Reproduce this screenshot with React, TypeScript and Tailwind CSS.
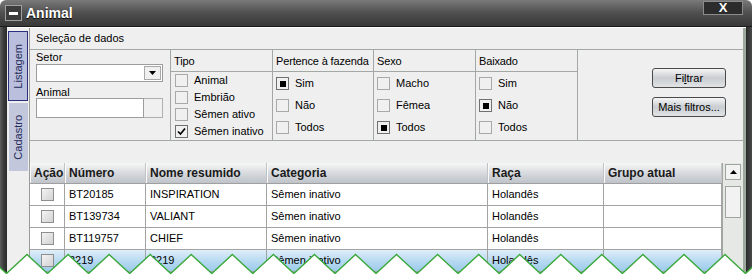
import React from 'react';

type Mark = 'sq' | 'check' | undefined;

function Box({ mark }: { mark?: Mark }) {
  return (
    <span
      className={
        'w-[13px] h-[13px] border bg-[#f0f0f0] flex items-center justify-center shrink-0 ' +
        (mark ? 'border-[#707070]' : 'border-[#a9a9a9]')
      }
    >
      {mark === 'sq' && <span className="w-[6px] h-[6px] bg-black" />}
      {mark === 'check' && (
        <svg width="11" height="11" viewBox="0 0 11 11">
          <polyline points="2,5.5 4.5,8 9,2.5" fill="none" stroke="#000" strokeWidth="1.7" />
        </svg>
      )}
    </span>
  );
}

function FilterCol({
  title,
  items,
  tight,
  width,
}: {
  title: string;
  items: { label: string; mark?: Mark }[];
  tight?: boolean;
  width: string;
}) {
  return (
    <div className={`${width} border-r border-[#a4a8a4] flex flex-col`}>
      <div className="h-[22px] border-b border-[#a4a8a4] flex items-center pl-[3px] pt-[1px] whitespace-nowrap overflow-hidden tracking-[-0.15px]">
        {title}
      </div>
      <div className={tight ? 'flex flex-col gap-[4px] pt-[2px] pl-[4px]' : 'flex flex-col gap-[9px] pt-[5px] pl-[3px]'}>
        {items.map(it => (
          <div key={it.label} className="flex items-center gap-[6px] h-[13px]">
            <Box mark={it.mark} />
            <span className="leading-[13px]">{it.label}</span>
          </div>
        ))}
      </div>
    </div>
  );
}

const cols = [
  { w: 'w-[35px]', label: 'Ação' },
  { w: 'w-[81px]', label: 'Número' },
  { w: 'w-[121px]', label: 'Nome resumido' },
  { w: 'w-[221px]', label: 'Categoria' },
  { w: 'w-[116px]', label: 'Raça' },
  { w: 'w-[118px]', label: 'Grupo atual' },
];

const rows = [
  ['BT20185', 'INSPIRATION', 'Sêmen inativo', 'Holandês', ''],
  ['BT139734', 'VALIANT', 'Sêmen inativo', 'Holandês', ''],
  ['BT119757', 'CHIEF', 'Sêmen inativo', 'Holandês', ''],
  ['3219', '3219', 'Sêmen inativo', 'Holandês', ''],
];

function Zigzag() {
  const period = 41.06;
  const pts: string[] = [];
  for (let k = -1; k < 19; k++) {
    const px = 27 + period * k;
    pts.push(`${px.toFixed(1)},4.5`);
    pts.push(`${(px + period / 2).toFixed(1)},23.5`);
  }
  const line = 'M' + pts.join(' L');
  const fill = line + ' L800,40 L-60,40 Z';
  return (
    <svg className="absolute left-0 top-[250px]" width="752" height="24" viewBox="0 0 752 24">
      <path d={fill} fill="#ffffff" />
      <path d={line} fill="none" stroke="#3aa83a" strokeWidth="1.4" />
    </svg>
  );
}

export default function App() {
  return (
    <div className="w-[752px] h-[274px] relative overflow-hidden bg-white text-[11px] text-black font-['Liberation_Sans',Arial,sans-serif]">
      {/* Title bar */}
      <div className="h-[27px] rounded-t-[6px] bg-linear-to-b from-[#7a7a7a] via-[#4f4f4f] to-[#383838] border-b border-[#1c1c1c] flex items-start">
        <div className="mt-[5px] ml-[5px] w-[17px] h-[16px] border border-[#a0a0a0] bg-[#3c3c3c] flex items-center justify-center">
          <div className="w-[9px] h-[3px] bg-white" />
        </div>
        <span className="mt-[5px] ml-[4px] text-white font-bold text-[14px] leading-[16px] [text-shadow:0_1px_1px_#000]">
          Animal
        </span>
        <div className="ml-auto mr-[9px] mt-[1px] w-[40px] h-[14px] border border-[#8c8c8c] bg-[#2c2c2c] flex items-center justify-center">
          <span className="text-white font-bold text-[13px] leading-[12px]">X</span>
        </div>
      </div>

      {/* Body */}
      <div className="flex h-[247px]">
        <div className="w-[7px] bg-linear-to-r from-[#5e5e5e] via-[#3c3c3c] to-[#2a2a2a]" />
        <div className="flex-1 flex bg-[#efefef] border-t border-white">
          {/* Tab strip */}
          <div className="w-[22px] flex flex-col pt-[3px] pl-[1px] gap-[2px]">
            <div className="w-[20px] h-[70px] bg-[#b9bfdc] border border-[#2c2f7c] flex items-center justify-center">
              <span className="[writing-mode:vertical-rl] rotate-180 text-[#1f2a5a]">Listagem</span>
            </div>
            <div className="w-[19px] h-[68px] bg-[#c3c7dc] flex items-center justify-center ml-[1px]">
              <span className="[writing-mode:vertical-rl] rotate-180 text-[#1f2a5a]">Cadastro</span>
            </div>
          </div>

          {/* Main panel */}
          <div className="w-[714px] border-l border-[#9a9a9a] flex flex-col">
            <div className="h-[21px] flex items-center pl-[6px]">Seleção de dados</div>

            {/* Filter panel */}
            <div className="h-[92px] border-y border-[#a4a8a4] flex">
              <div className="w-[141px] border-r border-[#a4a8a4] pl-[6px] pt-[1px] flex flex-col">
                <span className="leading-[13px]">Setor</span>
                <div className="w-[127px] h-[18px] border border-[#9c9c9c] bg-white flex justify-end p-[1px]">
                  <div className="w-[17px] h-[14px] border border-[#a8a8a8] bg-[#f0f0f0] flex items-center justify-center">
                    <svg width="7" height="4" viewBox="0 0 7 4">
                      <polygon points="0,0 7,0 3.5,4" fill="#000" />
                    </svg>
                  </div>
                </div>
                <span className="mt-[4px] leading-[12px]">Animal</span>
                <div className="flex">
                  <div className="w-[108px] h-[20px] border border-[#9c9c9c] bg-white" />
                  <div className="w-[19px] h-[20px] border border-[#b0b0b0] border-l-0 bg-[#f0f0f0]" />
                </div>
              </div>
              <FilterCol
                title="Tipo"
                width="w-[102px]"
                tight
                items={[
                  { label: 'Animal' },
                  { label: 'Embrião' },
                  { label: 'Sêmen ativo' },
                  { label: 'Sêmen inativo', mark: 'check' },
                ]}
              />
              <FilterCol
                title="Pertence à fazenda"
                width="w-[101px]"
                items={[{ label: 'Sim', mark: 'sq' }, { label: 'Não' }, { label: 'Todos' }]}
              />
              <FilterCol
                title="Sexo"
                width="w-[102px]"
                items={[{ label: 'Macho' }, { label: 'Fêmea' }, { label: 'Todos', mark: 'sq' }]}
              />
              <FilterCol
                title="Baixado"
                width="w-[102px]"
                items={[{ label: 'Sim' }, { label: 'Não', mark: 'sq' }, { label: 'Todos' }]}
              />
              <div className="flex-1 flex flex-col items-end pr-[17px] pt-[18px] gap-[9px]">
                <button className="w-[74px] h-[20px] rounded-[3px] border border-[#4a4a4a] bg-linear-to-b from-[#f6f6f6] via-[#c9cdd1] to-[#e2e4e6] flex items-center justify-center">
                  Fi<span className="underline">l</span>trar
                </button>
                <button className="w-[74px] h-[20px] rounded-[3px] border border-[#4a4a4a] bg-linear-to-b from-[#f6f6f6] via-[#c9cdd1] to-[#e2e4e6] flex items-center justify-center">
                  Mais filtros...
                </button>
              </div>
            </div>

            {/* Grid */}
            <div className="mt-[22px] flex">
              <div className="w-[692px] flex flex-col">
                <div className="h-[21px] flex bg-linear-to-b from-[#f7f7f7] via-[#d7dade] to-[#bfc4ca] border-b border-[#a0a0a0]">
                  {cols.map(c => (
                    <div
                      key={c.label}
                      className={`${c.w} border-r border-[#c0c2c4] border-l border-l-[#fafafa] flex items-center pl-[3px] font-bold text-[12px] text-[#1a1a1a]`}
                    >
                      {c.label}
                    </div>
                  ))}
                </div>
                {rows.map((r, i) => (
                  <div
                    key={i}
                    className={
                      'h-[22px] flex border-b border-[#a3a3a3] ' +
                      (i === 3 ? 'bg-linear-to-b from-[#e0eef9] via-[#b9dbf2] to-[#9ccaea]' : 'bg-white')
                    }
                  >
                    <div className="w-[35px] border-r border-[#a3a3a3] flex items-center justify-center">
                      <span className="w-[13px] h-[13px] border border-[#8e9090] bg-linear-to-br from-[#f4f4f4] to-[#d2d2d2]" />
                    </div>
                    {r.map((v, j) => (
                      <div key={j} className={`${cols[j + 1].w} border-r border-[#a3a3a3] flex items-center pl-[4px]`}>
                        {v}
                      </div>
                    ))}
                  </div>
                ))}
              </div>
              <div className="w-[21px] bg-[#e6e8e6] border-l border-[#a0a8a0] flex flex-col items-center pt-[1px] gap-[6px]">
                <div className="w-[16px] h-[16px] border border-[#9ea49e] bg-[#f2f2f2] flex items-center justify-center">
                  <svg width="7" height="4" viewBox="0 0 7 4">
                    <polygon points="0,4 7,4 3.5,0" fill="#000" />
                  </svg>
                </div>
                <div className="w-[16px] h-[32px] border border-[#9ea49e] bg-[#f2f2f2]" />
              </div>
            </div>
          </div>

          <div className="w-[3px] bg-[#9ea99e]" />
        </div>
        <div className="w-[6px] bg-linear-to-r from-[#2a2a2a] to-[#4a4a4a]" />
      </div>

      <Zigzag />
    </div>
  );
}
